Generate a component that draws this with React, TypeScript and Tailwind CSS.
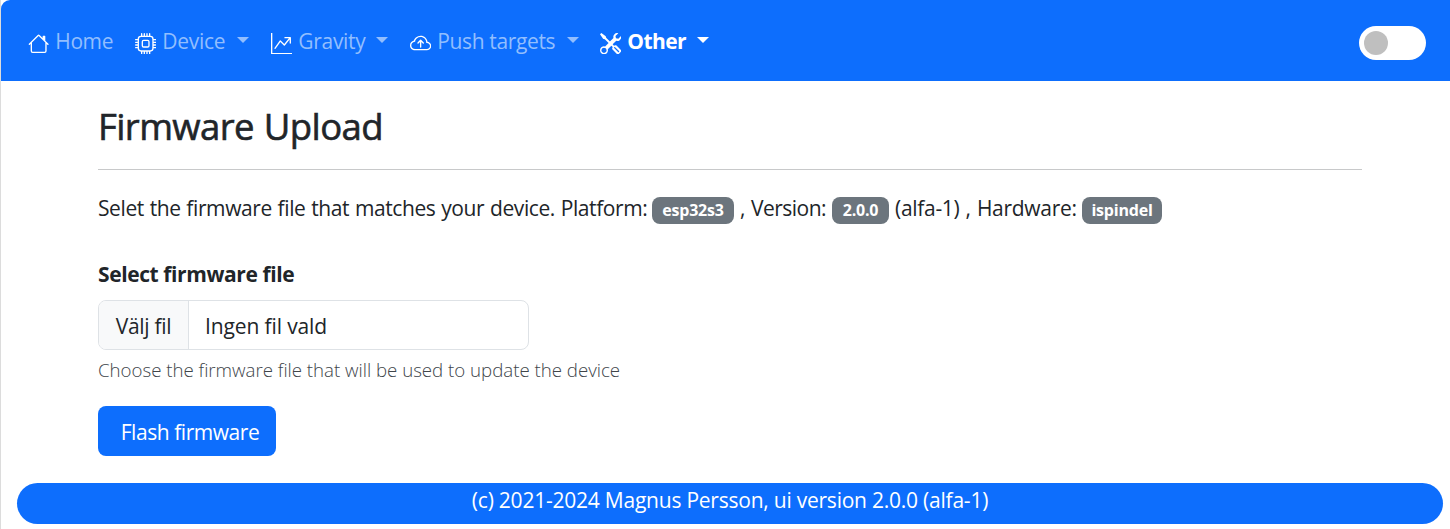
import type { ReactNode } from "react";
import { BsHouse, BsCpu, BsGraphUpArrow, BsCloudArrowUp, BsTools } from "react-icons/bs";

function Caret() {
  return (
    <span className="mb-[2px] h-0 w-0 border-x-[6px] border-t-[6px] border-x-transparent border-t-current" />
  );
}

function NavItem({
  icon,
  label,
  className,
  textClass,
  menu = true,
}: {
  icon: ReactNode;
  label: string;
  className: string;
  textClass: string;
  menu?: boolean;
}) {
  return (
    <a className={`flex shrink-0 items-center whitespace-nowrap ${className}`}>
      <span className="mt-[6px] mr-[6px] text-[21.3px] text-white">{icon}</span>
      <span className={`flex-1 pt-px ${textClass}`}>{label}</span>
      {menu && <Caret />}
    </a>
  );
}

function Badge({ children, className }: { children: ReactNode; className: string }) {
  return (
    <span
      className={`mt-[5px] flex h-[27px] shrink-0 items-center justify-center rounded-lg bg-[#6c757d] pb-px text-[16px] font-bold tracking-[-0.2px] text-white ${className}`}
    >
      {children}
    </span>
  );
}

export default function App() {
  return (
    <div className="h-[529px] overflow-hidden border-l border-[#dcdcdc] bg-white font-['Open_Sans','Noto_Sans',sans-serif] text-[21px] leading-8 text-[#212529]">
      <nav className="flex h-[81px] items-center rounded-tl-[9px] bg-[#0d6efd] pr-6 pl-[27px] text-[#92befe]">
        <NavItem icon={<BsHouse />} label="Home" className="w-[107px]" textClass="tracking-[-0.4px]" menu={false} />
        <NavItem icon={<BsCpu />} label="Device" className="w-[114px]" textClass="tracking-[-0.3px]" />
        <NavItem icon={<BsGraphUpArrow />} label="Gravity" className="ml-[22px] w-[117px]" textClass="tracking-[-0.3px]" />
        <NavItem icon={<BsCloudArrowUp />} label="Push targets" className="ml-[22px] w-[169px]" textClass="tracking-[-0.36px]" />
        <NavItem
          icon={<BsTools />}
          label="Other"
          className="ml-[21px] w-[109px] text-white"
          textClass="font-bold tracking-[-0.6px]"
        />
        <button className="mt-1 ml-auto flex h-[34px] w-[67px] items-center rounded-full bg-white pl-[5px]">
          <span className="size-6 rounded-full bg-[#bfbfbf]" />
        </button>
      </nav>

      <main className="flex flex-col pr-[88px] pl-[97px]">
        <h1 className="mt-[21px] h-[48px] text-[36.5px] leading-[48px] tracking-[-0.6px] [word-spacing:1px] whitespace-nowrap [-webkit-text-stroke:0.6px_#212529]">
          Firmware Upload
        </h1>
        <hr className="mt-[19px] border-[#c8c9ca]" />
        <div className="mt-[22px] flex h-8 items-center whitespace-nowrap">
          <span className="w-[554px] shrink-0 tracking-[-0.4px] [word-spacing:0.7px]">
            Selet the firmware file that matches your device. Platform:
          </span>
          <Badge className="w-[82px]">esp32s3</Badge>
          <span className="w-[98px] shrink-0 pl-[6px] tracking-[-0.5px] [word-spacing:1px]">, Version:</span>
          <Badge className="w-[57px]">2.0.0</Badge>
          <span className="w-[193px] shrink-0 pl-[6px] tracking-[-0.3px] [word-spacing:1px]">(alfa-1) , Hardware:</span>
          <Badge className="w-[80px]">ispindel</Badge>
        </div>
        <label className="mt-[34px] h-8 leading-8 font-bold tracking-[-0.4px]">Select firmware file</label>
        <div className="mt-[10px] flex h-[50px] w-[431px] items-center overflow-hidden rounded-lg border border-[#dee2e6] leading-[48px]">
          <span className="flex h-full w-[90px] justify-center border-r border-[#dee2e6] bg-[#f8f9fa] pt-px tracking-[-0.3px]">
            Välj fil
          </span>
          <span className="pt-px pl-4 tracking-[-0.12px]">Ingen fil vald</span>
        </div>
        <p className="mt-[6px] h-7 text-[18.7px] leading-7 font-light tracking-[-0.02px] text-[#40454a]">
          Choose the firmware file that will be used to update the device
        </p>
        <button className="mt-[22px] h-[50px] w-[178px] rounded-lg bg-[#0d6efd] pt-px pl-[6px] tracking-[-0.45px] text-white">
          Flash firmware
        </button>
      </main>

      <footer className="mt-[27px] mr-[7px] ml-4 h-[41px] rounded-full bg-[#0d6efd] text-center leading-[34px] tracking-[-0.23px] text-white">
        (c) 2021-2024 Magnus Persson, ui version 2.0.0 (alfa-1)
      </footer>
    </div>
  );
}
